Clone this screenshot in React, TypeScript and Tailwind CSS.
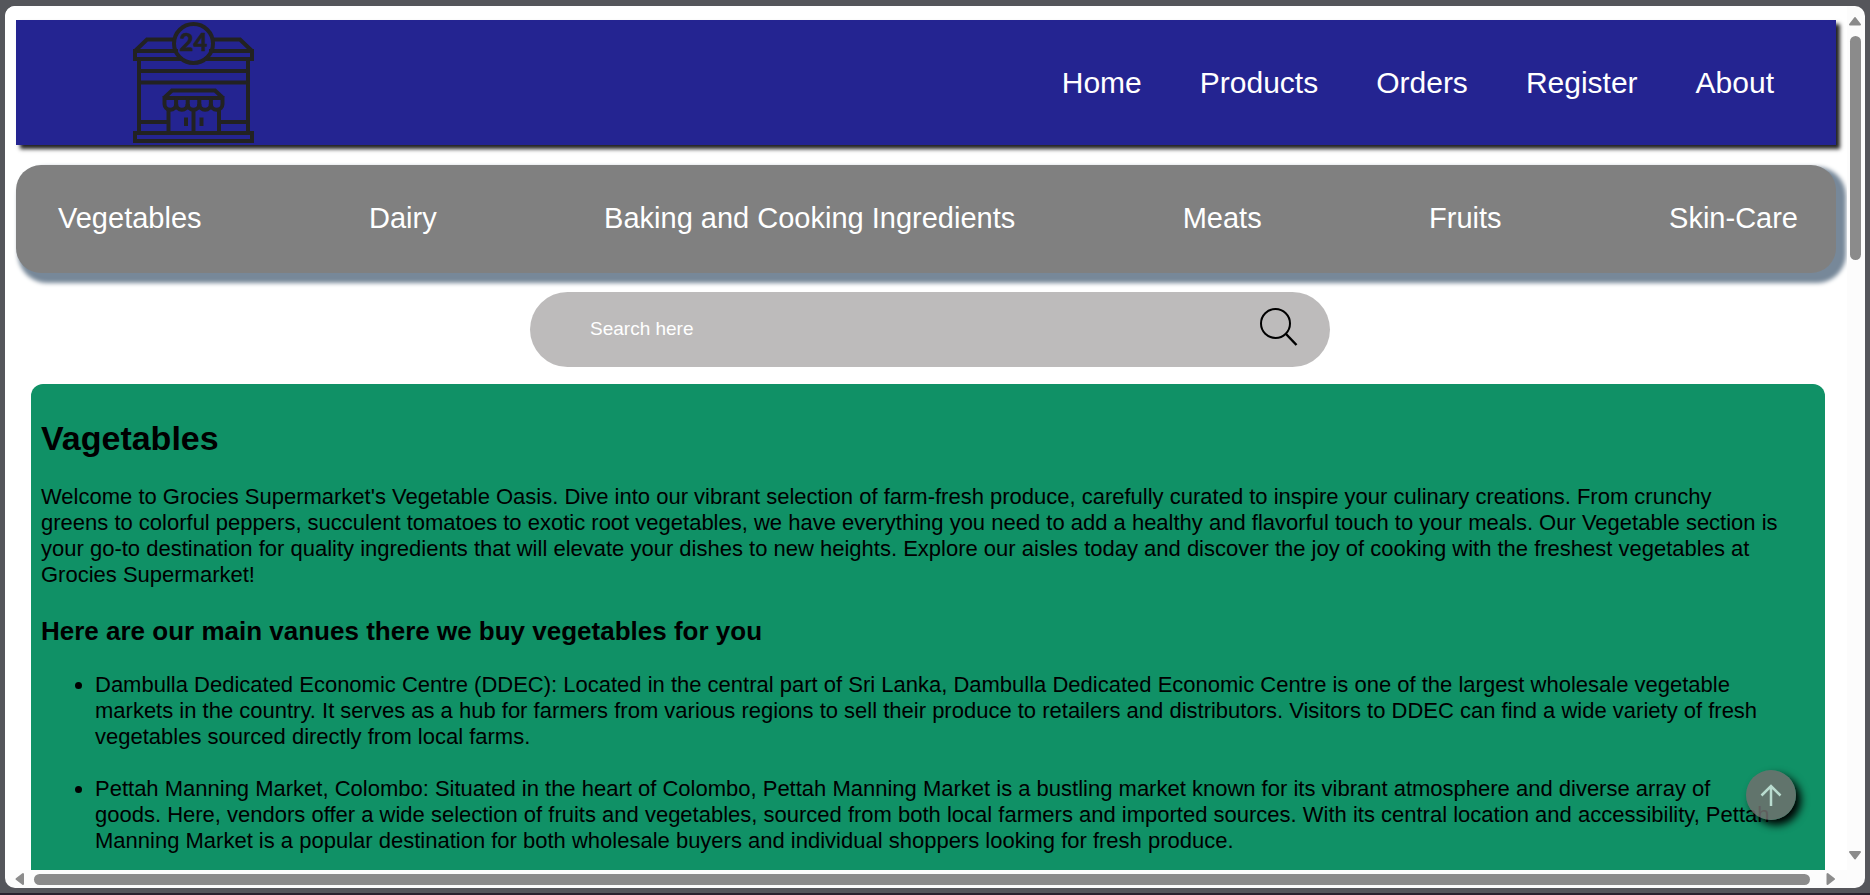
import type { ReactNode } from "react";

const mainLinks = ["Home", "Products", "Orders", "Register", "About"];
const categories = [
  "Vegetables",
  "Dairy",
  "Baking and Cooking Ingredients",
  "Meats",
  "Fruits",
  "Skin-Care",
];
const introLines = [
  "Welcome to Grocies Supermarket's Vegetable Oasis. Dive into our vibrant selection of farm-fresh produce, carefully curated to inspire your culinary creations. From crunchy",
  "greens to colorful peppers, succulent tomatoes to exotic root vegetables, we have everything you need to add a healthy and flavorful touch to your meals. Our Vegetable section is",
  "your go-to destination for quality ingredients that will elevate your dishes to new heights. Explore our aisles today and discover the joy of cooking with the freshest vegetables at",
  "Grocies Supermarket!",
];
const venues = [
  [
    "Dambulla Dedicated Economic Centre (DDEC): Located in the central part of Sri Lanka, Dambulla Dedicated Economic Centre is one of the largest wholesale vegetable",
    "markets in the country. It serves as a hub for farmers from various regions to sell their produce to retailers and distributors. Visitors to DDEC can find a wide variety of fresh",
    "vegetables sourced directly from local farms.",
  ],
  [
    "Pettah Manning Market, Colombo: Situated in the heart of Colombo, Pettah Manning Market is a bustling market known for its vibrant atmosphere and diverse array of",
    "goods. Here, vendors offer a wide selection of fruits and vegetables, sourced from both local farmers and imported sources. With its central location and accessibility, Pettah",
    "Manning Market is a popular destination for both wholesale buyers and individual shoppers looking for fresh produce.",
  ],
];

function Lines({ lines }: { lines: string[] }) {
  return (
    <>
      {lines.map((line, index) => (
        <span key={line}>
          {index > 0 && <br />}
          {line}
        </span>
      ))}
    </>
  );
}

function StoreLogo() {
  return (
    <svg
      viewBox="0 0 125 125"
      className="size-[125px]"
      fill="none"
      stroke="#222222"
      strokeWidth="4"
      role="img"
      aria-label="Grocies Supermarket"
    >
      <path d="M44 19.500H16L4 31M81 19.500H109L121 31" />
      <path d="M47 31H4V39H52M78 31H121V39H73" />
      <path d="M8 39V113M117 39V113M8 51H117M8 62.500H117M8 102H37M88 102H117" />
      <rect x="4" y="113" width="117" height="8" />
      <circle cx="62.500" cy="23.500" r="19.500" />
      <path d="M33 78L41 70.500H84L92 78" />
      <path d="M33.500 78H91.500V84A5.800 5.800 0 0 1 79.900 84A5.800 5.800 0 0 1 68.300 84A5.800 5.800 0 0 1 56.700 84A5.800 5.800 0 0 1 45.100 84A5.800 5.800 0 0 1 33.500 84Z" />
      <path d="M45.100 78V86M56.700 78V86M68.300 78V86M79.900 78V86" />
      <path d="M37.500 89V113M88 89V113M62.500 89V113M55 97.500V106M70.500 97.500V106" />
      <text
        x="62.500"
        y="31"
        textAnchor="middle"
        fill="#222222"
        strokeWidth="0.500"
        strokeLinejoin="round"
        className="[font-family:Lato,sans-serif] text-[24px] font-black"
      >
        24
      </text>
    </svg>
  );
}

function SearchIcon() {
  return (
    <svg viewBox="0 0 40 40" className="size-10" fill="none" stroke="#000" strokeWidth="2">
      <circle cx="15.500" cy="15.500" r="14.500" />
      <path d="M26 26L36.500 37" strokeWidth="2.500" />
    </svg>
  );
}

function Arrow({ children }: { children: ReactNode }) {
  return (
    <svg viewBox="0 0 14 14" className="size-3.5 shrink-0" fill="#8b8b8b" stroke="#8b8b8b" strokeWidth="2" strokeLinejoin="round">
      {children}
    </svg>
  );
}

export default function App() {
  return (
    <div className="h-screen border-b-2 border-[#2a222e] bg-[#55565b] px-[5px] pt-1.5 pb-[5px] font-['Liberation_Sans',Arial,sans-serif] text-black">
      <div className="flex h-full flex-col overflow-hidden rounded-[10px] bg-[#fcfcfc]">
        <div className="flex min-h-0 flex-1">
          <div className="relative min-w-0 flex-1 overflow-hidden bg-white px-[11px] pt-3.5">
            <header className="flex h-[125px] items-center justify-between bg-[#242491] pr-[62px] pl-[115px] shadow-[4px_4px_4px_#222222]">
              <a href="#home">
                <StoreLogo />
              </a>
              <nav aria-label="Main" className="flex gap-[58px] text-[30px] text-white">
                {mainLinks.map((label) => (
                  <a key={label} href={"#" + label.toLowerCase()}>
                    {label}
                  </a>
                ))}
              </nav>
            </header>

            <nav
              aria-label="Categories"
              className="mt-5 flex h-[108px] items-center justify-between rounded-[25px] bg-[#808080] pr-[38px] pl-[42px] text-[29px] text-white shadow-[6px_6px_4px_4px_#778899]"
            >
              {categories.map((label) => (
                <a key={label} href={"#" + label.toLowerCase()}>
                  {label}
                </a>
              ))}
            </nav>

            <div className="mt-[19px] flex justify-center pl-2">
              <form
                role="search"
                className="flex h-[75px] w-[800px] max-w-full items-center rounded-full bg-[#bdbbbb] pr-[30px] pl-15"
              >
                <input
                  type="search"
                  aria-label="Search here"
                  placeholder="Search here"
                  className="min-w-0 flex-1 bg-transparent text-[19px] outline-none placeholder:text-white"
                />
                <button type="button" aria-label="Search" className="pb-1">
                  <SearchIcon />
                </button>
              </form>
            </div>

            <main className="mt-[17px] mr-[11px] ml-[15px] rounded-xl bg-[#109166] px-2.5 pt-[34px] pb-20 text-[22px] leading-[26px]">
              <h1 className="text-[34px] leading-10 font-bold">Vagetables</h1>
              <p className="mt-[26px]">
                <Lines lines={introLines} />
              </p>
              <h2 className="mt-7 text-[26px] leading-[30px] font-bold">
                Here are our main vanues there we buy vegetables for you
              </h2>
              <ul className="mt-[26px] flex list-disc flex-col gap-[26px] pl-[54px]">
                {venues.map((lines) => (
                  <li key={lines[0]}>
                    <Lines lines={lines} />
                  </li>
                ))}
              </ul>
            </main>

            <button
              type="button"
              aria-label="Back to top"
              className="absolute right-[51px] bottom-[50px] flex size-[50px] items-center justify-center rounded-full bg-[#706f6d]/85 text-[#b9dccf] shadow-[5px_5px_8px_#000000]"
            >
              <svg viewBox="0 0 24 24" className="size-6" fill="none" stroke="currentColor" strokeWidth="2.500">
                <path d="M12 23V3M2.500 12.500L12 3L21.500 12.500" />
              </svg>
            </button>
          </div>

          <div aria-hidden="true" className="flex w-[18px] flex-col items-center pt-2 pr-0.5 pb-2">
            <Arrow>
              <path d="M7 4L12 10.500H2Z" />
            </Arrow>
            <div className="mt-2 flex-1">
              <div className="h-56 w-[11px] rounded-full bg-[#8b8b8b]" />
            </div>
            <Arrow>
              <path d="M7 10.500L12 4H2Z" />
            </Arrow>
          </div>
        </div>

        <div aria-hidden="true" className="flex h-[18px] items-center pr-[27px] pl-[9px]">
          <Arrow>
            <path d="M2.500 7L9 2V12Z" />
          </Arrow>
          <div className="mr-3.5 ml-1.5 h-[11px] flex-1 rounded-full bg-[#8b8b8b]" />
          <Arrow>
            <path d="M10 7L3.500 2V12Z" />
          </Arrow>
        </div>
      </div>
    </div>
  );
}
